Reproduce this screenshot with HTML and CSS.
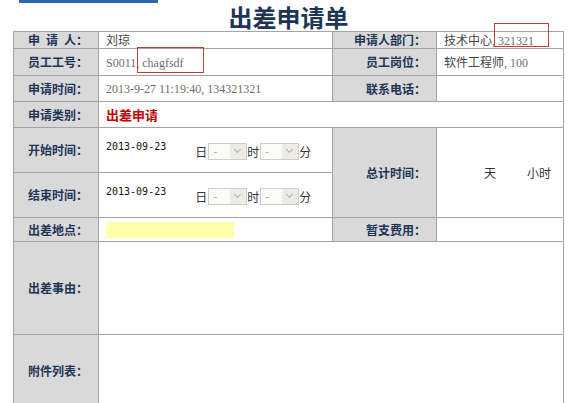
FILE: index.html
```html
<!DOCTYPE html>
<html>

<head>
    <meta charset="utf-8">
    <title>出差申请单</title>
    <link rel="stylesheet" href="styles.css">
</head>

<body>
    <div id="page">
        <div class="top_bar"></div>
        <h1 class="title">出差申请单</h1>

        <table class="apply_table">
            <colgroup>
                <col class="col_label">
                <col class="col_value">
                <col class="col_label2">
                <col class="col_value2">
            </colgroup>
            <tr class="row_name">
                <th>申&ensp;请&ensp;人：</th>
                <td>刘琼</td>
                <th>申请人部门：</th>
                <td>技术中心<span class="latin">, 321321</span></td>
            </tr>
            <tr class="row_no">
                <th>员工工号：</th>
                <td><span class="latin">S0011, chagfsdf</span></td>
                <th>员工岗位：</th>
                <td>软件工程师<span class="latin">, 100</span></td>
            </tr>
            <tr class="row_normal">
                <th>申请时间：</th>
                <td><span class="latin">2013-9-27 11:19:40, 134321321</span></td>
                <th>联系电话：</th>
                <td></td>
            </tr>
            <tr class="row_normal">
                <th>申请类别：</th>
                <td colspan="3"><span class="type">出差申请</span></td>
            </tr>
            <tr class="row_time">
                <th>开始时间：</th>
                <td class="time_cell">
                    <div class="time_line">
                        <span class="date">2013-09-23</span>
                        <span class="pick">日<span class="sel"><span class="sel_text">-</span><span class="sel_btn"></span></span>时<span class="sel"><span class="sel_text">-</span><span class="sel_btn"></span></span>分</span>
                    </div>
                </td>
                <th rowspan="2">总计时间：</th>
                <td rowspan="2" class="total_cell"><span>天</span><span class="hours">小时</span></td>
            </tr>
            <tr class="row_time">
                <th>结束时间：</th>
                <td class="time_cell">
                    <div class="time_line">
                        <span class="date">2013-09-23</span>
                        <span class="pick">日<span class="sel"><span class="sel_text">-</span><span class="sel_btn"></span></span>时<span class="sel"><span class="sel_text">-</span><span class="sel_btn"></span></span>分</span>
                    </div>
                </td>
            </tr>
            <tr class="row_place">
                <th>出差地点：</th>
                <td><span class="place_input"></span></td>
                <th>暂支费用：</th>
                <td></td>
            </tr>
            <tr class="row_reason">
                <th>出差事由：</th>
                <td colspan="3"></td>
            </tr>
            <tr class="row_files">
                <th>附件列表：</th>
                <td colspan="3"></td>
            </tr>
        </table>

        <div class="mark mark_no"></div>
        <div class="mark mark_dept"></div>
    </div>
</body>

</html>
```

FILE: styles.css
```css
:root {
    --line: #a3a3a3;
    --label-bg: #d9d9d9;
    --navy: #1f3556;
    --grey: #6e6e6e;
}

body {
    margin: 0;
    background-color: #fff;
    font-family: "Noto Sans CJK SC", sans-serif;
    font-size: 12px;
    color: #444;
}

#page {
    position: relative;
    width: 581px;
}

.top_bar {
    margin-left: 19px;
    width: 139px;
    height: 3px;
    background-color: #2f66a9;
}

.title {
    margin: 0;
    width: 551px;
    margin-left: 13px;
    height: 28px;
    line-height: 28px;
    text-align: center;
    font-size: 24px;
    font-weight: bold;
    color: var(--navy);
}

.apply_table {
    margin-left: 13px;
    width: 551px;
    table-layout: fixed;
    border-collapse: collapse;
}

.col_label { width: 85px; }
.col_value { width: 234px; }
.col_label2 { width: 104px; }
.col_value2 { width: 127px; }

.apply_table th,
.apply_table td {
    border: 1px solid var(--line);
    padding: 0 7px;
    line-height: 14px;
    white-space: nowrap;
    overflow: hidden;
}

.apply_table th {
    background-color: var(--label-bg);
    text-align: right;
    padding-right: 10px;
    font-weight: bold;
    color: var(--navy);
}

.row_name th, .row_name td { height: 16px; }
.row_no th, .row_no td { height: 26px; }
.row_normal th, .row_normal td { height: 25px; }
.row_time th, .row_time td { height: 44px; }
.row_place th, .row_place td { height: 23px; }
.row_reason th, .row_reason td { height: 92px; }
.row_files th, .row_files td { height: 72px; }

.latin {
    font-family: "Liberation Serif", serif;
    color: var(--grey);
}

.type {
    font-size: 13px;
    font-weight: bold;
    color: #c40000;
}

.apply_table .time_cell {
    vertical-align: top;
}

.time_line {
    display: flex;
    align-items: flex-start;
    padding-top: 14px;
}

.date {
    font-family: "DejaVu Sans Mono", monospace;
    font-size: 10px;
    line-height: 12px;
    color: #111;
    margin-top: -1px;
}

.pick {
    display: flex;
    align-items: center;
    margin-left: 29px;
    margin-top: 1px;
    color: #333;
}

.sel {
    display: flex;
    width: 37px;
    height: 15px;
    border: 1px solid #cfcfc6;
    background-color: #fbfbf8;
    margin: 0 0 0 1px;
}

.sel_text {
    flex: 1;
    padding-left: 4px;
    line-height: 14px;
    color: #a8a8a8;
}

.sel_btn {
    position: relative;
    width: 16px;
    background-color: #ececE4;
}

.sel_btn::after {
    content: "";
    position: absolute;
    left: 5px;
    top: 3px;
    width: 4px;
    height: 4px;
    border-right: 1.5px solid #b0b0b0;
    border-bottom: 1.5px solid #b0b0b0;
    transform: rotate(45deg);
}

.apply_table .total_cell {
    padding-left: 47px;
    color: #333;
}

.hours {
    margin-left: 31px;
}

.place_input {
    display: block;
    width: 128px;
    height: 16px;
    background-color: #ffffa8;
}

.mark {
    position: absolute;
    border: 1px solid #c23b3b;
}

.mark_no {
    left: 137px;
    top: 47px;
    width: 65px;
    height: 24px;
}

.mark_dept {
    left: 494px;
    top: 23px;
    width: 53px;
    height: 22px;
}
```
